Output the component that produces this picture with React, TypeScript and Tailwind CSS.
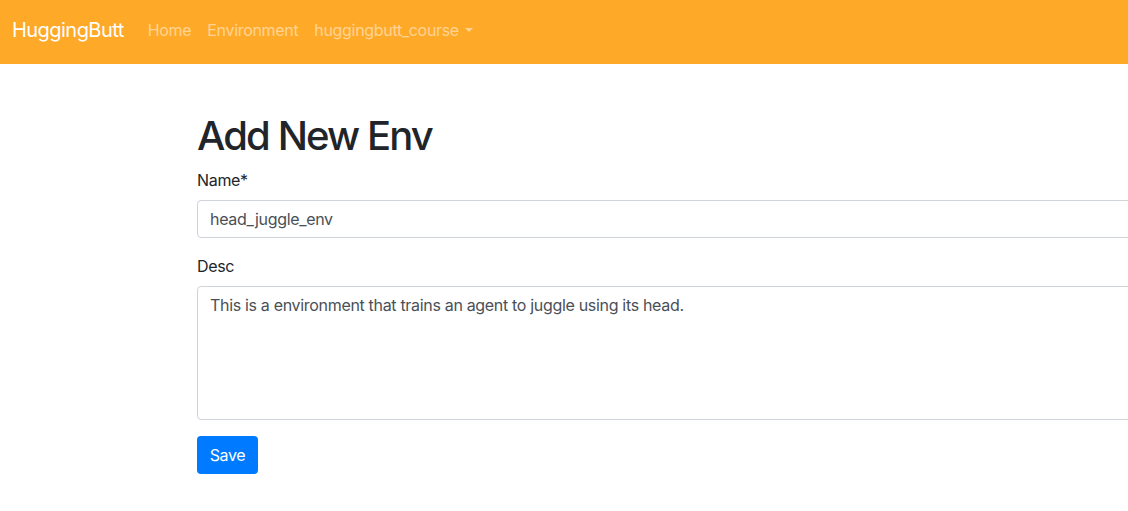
import React from "react";

function NavBar() {
  return (
    <nav className="flex h-16 items-center bg-[#ffa928] pb-[5px] pl-3">
      <a href="#" className="mr-4 text-[20px] leading-[30px] tracking-[-0.027em] text-white">
        HuggingButt
      </a>
      <ul className="flex items-center">
        <li>
          <a href="#" className="block px-2 py-2 text-white/50">
            Home
          </a>
        </li>
        <li>
          <a href="#" className="block px-2 py-2 text-white/50">
            Environment
          </a>
        </li>
        <li>
          <a href="#" className="flex items-center px-2 py-2 text-white/50">
            huggingbutt_course
            <span className="ml-[6px] mt-[1px] h-0 w-0 border-x-[4.8px] border-t-[4.8px] border-x-transparent border-t-white/50" />
          </a>
        </li>
      </ul>
    </nav>
  );
}

export default function App() {
  return (
    <div
      className="min-h-[511px] w-full overflow-hidden bg-white text-[16px] leading-6 tracking-[-0.02em] text-[#212529]"
      style={{ fontFamily: "Inter, 'Liberation Sans', sans-serif" }}
    >
      <NavBar />
      <main className="pl-[197px] pt-[48px]">
        <form className="w-[1100px]" onSubmit={(e) => e.preventDefault()}>
          <h1 className="mb-2 text-[40px] font-medium leading-[48px] tracking-[-0.047em]">Add New Env</h1>
          <div className="mb-4">
            <label className="mb-2 block">Name*</label>
            <input
              type="text"
              defaultValue="head_juggle_env"
              className="block h-[38px] w-full rounded border border-[#ced4da] px-3 py-1.5 tracking-[-0.02em] text-[#495057] outline-none"
            />
          </div>
          <div className="mb-4">
            <label className="mb-2 block">Desc</label>
            <textarea
              rows={5}
              defaultValue="This is a environment that trains an agent to juggle using its head."
              className="block h-[134px] w-full resize-none rounded border border-[#ced4da] px-3 py-1.5 tracking-[-0.02em] text-[#495057] outline-none"
            />
          </div>
          <button
            type="submit"
            className="h-[38px] w-[61px] rounded bg-[#007bff] tracking-[-0.02em] text-white"
          >
            Save
          </button>
        </form>
      </main>
    </div>
  );
}
